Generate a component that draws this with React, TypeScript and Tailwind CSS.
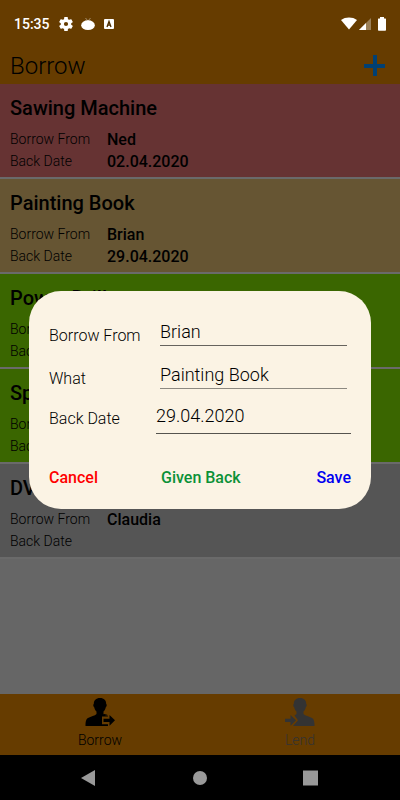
import clsx from "clsx";

type Item = {
  title: string;
  person: string;
  date: string;
  color: string;
};

const items: Item[] = [
  { title: "Sawing Machine", person: "Ned", date: "02.04.2020", color: "bg-[#663333]" },
  { title: "Painting Book", person: "Brian", date: "29.04.2020", color: "bg-[#665533]" },
  { title: "Power Drill", person: "", date: "", color: "bg-[#3a6600]" },
  { title: "Sp", person: "", date: "", color: "bg-[#3a6600]" },
  { title: "DV", person: "Claudia", date: "", color: "bg-[#555555]" },
];

function StatusBar() {
  return (
    <div className="flex h-12 items-center justify-between pr-3 pl-3.5 text-white">
      <div className="flex items-center gap-2">
        <span className="mr-px text-sm font-medium">15:35</span>
        <svg className="h-3.5 w-3.5" viewBox="2 2 20 20" fill="currentColor">
          <path d="M19.4 13a7.5 7.5 0 0 0 0-2l2.1-1.6a.5.5 0 0 0 .1-.7l-2-3.4a.5.5 0 0 0-.6-.2l-2.5 1a7.3 7.3 0 0 0-1.7-1L14.5 2.4a.5.5 0 0 0-.5-.4h-4a.5.5 0 0 0-.5.4L9.2 5.1a7.7 7.7 0 0 0-1.7 1L5 5.1a.5.5 0 0 0-.6.2l-2 3.4a.5.5 0 0 0 .1.7L4.6 11a7.5 7.5 0 0 0 0 2l-2.1 1.6a.5.5 0 0 0-.1.7l2 3.4c.1.2.4.3.6.2l2.5-1a7.3 7.3 0 0 0 1.7 1l.3 2.7c0 .2.2.4.5.4h4c.3 0 .5-.2.5-.4l.3-2.7a7.7 7.7 0 0 0 1.7-1l2.5 1c.2.1.5 0 .6-.2l2-3.4a.5.5 0 0 0-.1-.7zM12 15a3 3 0 1 1 0-6 3 3 0 0 1 0 6z" />
        </svg>
        <svg className="h-3.5 w-3.5" viewBox="0 0 14 14" fill="currentColor">
          <ellipse cx="7" cy="8.2" rx="6.8" ry="4.9" />
          <path d="M4.5 1 7 4M9.5 1 7 4" stroke="currentColor" strokeWidth=".6" opacity=".7" />
        </svg>
        <svg className="h-3 w-3" viewBox="0 0 12 12" fill="none">
          <rect x="1" y="1" width="10" height="10" rx="1" fill="white" />
          <path d="M4 9 6 3.5 8 9M4.7 7.2h2.6" stroke="#4d2d00" strokeWidth="1.3" />
        </svg>
      </div>
      <div className="flex items-center">
        <svg className="h-4 w-4" viewBox="0 0 16 16" fill="currentColor">
          <path d="M0 4C4.5.7 11.5.7 16 4L8 13.5z" />
        </svg>
        <svg className="h-4 w-4" viewBox="0 0 16 16" fill="currentColor">
          <path d="M14 2v12H2z" opacity=".35" />
          <path d="M9 7v7H2z" />
        </svg>
        <svg className="ml-[3px] h-4 w-3" viewBox="0 0 12 16" fill="currentColor">
          <path d="M4 1h4v1.5h1.5a.5.5 0 0 1 .5.5v11a.8.8 0 0 1-.8.8H2.8A.8.8 0 0 1 2 14V3a.5.5 0 0 1 .5-.5H4z" />
        </svg>
      </div>
    </div>
  );
}

function ItemCard({ item }: { item: Item }) {
  return (
    <li className={clsx("h-[95px] border-b-2 border-[#6a6a6a] px-2.5 pt-2.5", item.color)}>
      <h2 className="text-xl leading-7 font-medium">{item.title}</h2>
      <dl className="mt-1.5 grid auto-rows-[22px] grid-cols-[97px_1fr] leading-[22px]">
        <dt className="text-sm leading-[22px] font-light">Borrow From</dt>
        <dd className="pt-px font-medium">{item.person}</dd>
        <dt className="text-sm leading-[22px] font-light">Back Date</dt>
        <dd className="pt-px font-medium">{item.date}</dd>
      </dl>
    </li>
  );
}

const bust =
  "M15 0c4 0 6.3 2.4 6.2 6 .9.4.6 2.7-.4 3.2-.4 2-1.2 3.2-2.3 4.2v2.6c1.5 1.8 5.7 2.4 8.5 4 2.3 1.2 2.5 4.5 2.5 8H.5c0-3.5.2-6.8 2.5-8 2.8-1.6 7-2.2 8.5-4v-2.6c-1.1-1-1.9-2.2-2.3-4.2-1-.5-1.3-2.8-.4-3.2C8.7 2.4 11 0 15 0z";

function PersonOut() {
  return (
    <svg className="h-7 w-[30px]" viewBox="0 0 30 28" fill="currentColor">
      <path d={bust} />
      <path d="M17 18.5h6V14h7v14h-7v-1.5h-6z" fill="#663c00" />
      <path d="M18.5 20.7h6V17l5.500 5.300-5.500 5.500V24h-6z" />
      <path d="M14 26.500h9V28h-9z" />
      <path d="M23 17.500c-1-1-2.500-1.300-4-1.500v1.500z" />
    </svg>
  );
}

function PersonIn() {
  return (
    <svg className="h-7 w-[30px]" viewBox="0 0 30 28" fill="currentColor">
      <path d={bust} />
      <path d="M0 14h7l6 8.3-5 5.700H0z" fill="#663c00" />
      <path d="M0 20.700h5.500V17l5.500 5.300-5.500 5.500V24H0z" />
    </svg>
  );
}

function EditDialog() {
  return (
    <div className="fixed inset-0 flex items-center justify-center px-[29px]">
      <form
        role="dialog"
        aria-label="Edit item"
        className="w-full max-w-[342px] rounded-[32px] bg-[#fbf3e4] px-5 pt-[27px] pb-[19px]"
      >
        <div className="grid grid-cols-[107px_1fr]">
          <label htmlFor="from" className="pt-1.5 font-light">
            Borrow From
          </label>
          <input
            id="from"
            defaultValue="Brian"
            className="mx-1 mb-[15px] h-7 min-w-0 border-b border-[#66635d] text-lg font-light outline-none"
          />
          <label htmlFor="what" className="pt-1.5 font-light">
            What
          </label>
          <input
            id="what"
            defaultValue="Painting Book"
            className="mx-1 mb-2 h-7 min-w-0 border-b border-[#8c8880] text-lg font-light outline-none"
          />
          <label htmlFor="date" className="pt-2.5 font-light">
            Back Date
          </label>
          <input
            id="date"
            defaultValue="29.04.2020"
            className="h-[37px] min-w-0 border-b border-[#55534e] text-lg font-light outline-none"
          />
        </div>
        <div className="mt-8 grid grid-cols-[112px_1fr_auto] justify-items-start font-medium">
          <button type="button" className="text-[#ff0000]">
            Cancel
          </button>
          <button type="button" className="text-[#0b9137]">
            Given Back
          </button>
          <button type="submit" className="text-[#0000f0]">
            Save
          </button>
        </div>
      </form>
    </div>
  );
}

export default function App() {
  return (
    <div className="flex min-h-screen flex-col bg-[#666666] font-['Roboto',sans-serif] text-black">
      <header className="bg-[#663c00]">
        <StatusBar />
        <div className="flex h-9 items-center justify-between pr-3.5 pl-2.5">
          <h1 className="text-2xl font-light">Borrow</h1>
          <button type="button" aria-label="Add item" className="text-[#004073]">
            <svg className="h-[22px] w-[22px]" viewBox="0 0 22 22" fill="currentColor">
              <path d="M9 0h4v9h8v4h-8v8H9v-8H0V9h9z" />
            </svg>
          </button>
        </div>
      </header>
      <ul className="flex-1">
        {items.map((item) => (
          <ItemCard key={item.title} item={item} />
        ))}
      </ul>
      <nav className="grid h-[61px] grid-cols-2 bg-[#663c00] text-sm font-light">
        <button type="button" className="flex flex-col items-center pt-1">
          <PersonOut />
          <span className="mt-1">Borrow</span>
        </button>
        <button type="button" className="flex flex-col items-center pt-1 text-[#333333]">
          <PersonIn />
          <span className="mt-1">Lend</span>
        </button>
      </nav>
      <div className="flex h-[45px] items-center justify-center gap-[95px] bg-black text-[#999999]">
        <button type="button" aria-label="Back">
          <svg className="h-4 w-4" viewBox="0 0 16 16" fill="currentColor">
            <path d="M14 0v16L0 8z" />
          </svg>
        </button>
        <button type="button" aria-label="Home">
          <svg className="h-4 w-4" viewBox="0 0 16 16" fill="currentColor">
            <circle cx="8" cy="8" r="7" />
          </svg>
        </button>
        <button type="button" aria-label="Overview">
          <svg className="h-4 w-4" viewBox="0 0 16 16" fill="currentColor">
            <path d="M0 .5h15v15H0z" />
          </svg>
        </button>
      </div>
      <EditDialog />
    </div>
  );
}
